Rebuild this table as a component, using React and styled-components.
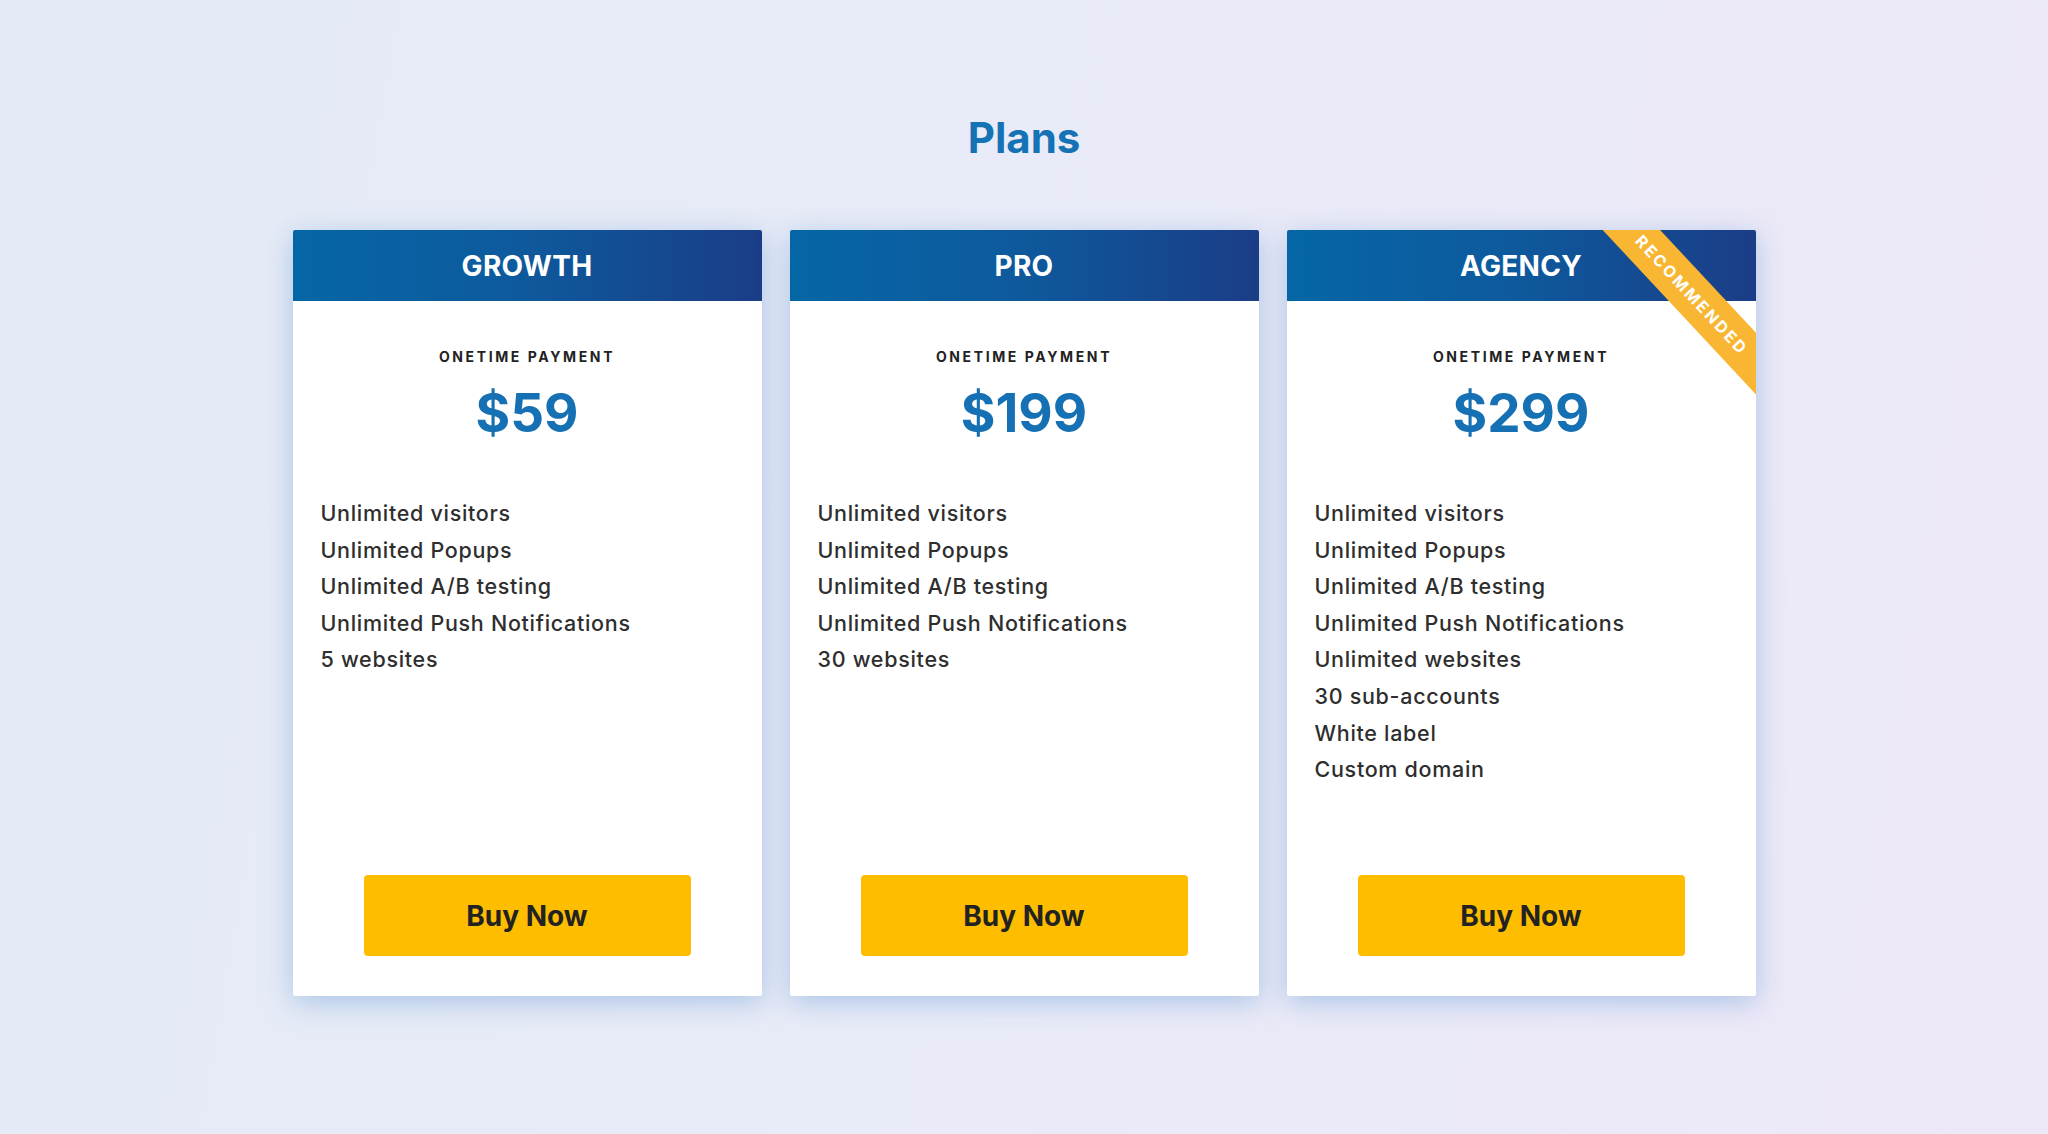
import React from "react";
import styled, { createGlobalStyle } from "styled-components";

const GlobalStyle = createGlobalStyle`
  html, body {
    margin: 0;
    padding: 0;
  }
  body {
    font-family: Inter, "Noto Sans", "Liberation Sans", sans-serif;
    background: linear-gradient(100deg, #e4ebf6 0%, #e9ebf8 50%, #ede8f8 100%);
  }
`;

const Page = styled.div`
  width: 2048px;
  height: 1134px;
  display: flex;
  flex-direction: column;
  align-items: center;
  padding-top: 113px;
  box-sizing: border-box;
`;

const Title = styled.h1`
  margin: 0 0 68px;
  font-size: 42px;
  line-height: 49px;
  font-weight: 700;
  color: #1572b4;
`;

const Row = styled.div`
  display: flex;
  gap: 28px;
`;

const Card = styled.div`
  position: relative;
  overflow: hidden;
  width: 469px;
  height: 766px;
  background: #fff;
  border-radius: 2px;
  box-shadow: 0 6px 28px rgba(120, 165, 215, 0.55);
  display: flex;
  flex-direction: column;
  align-items: center;
`;

const Header = styled.div`
  width: 100%;
  height: 71px;
  display: flex;
  align-items: center;
  justify-content: center;
  background: linear-gradient(90deg, #0566a6 0%, #0d5b9e 45%, #1b3d87 100%);
  color: #fff;
  font-size: 28px;
  font-weight: 700;
  letter-spacing: 0.3px;
`;

const Ribbon = styled.div`
  position: absolute;
  top: 44px;
  right: -56px;
  width: 240px;
  height: 42px;
  background: #f8b632;
  color: #fff;
  transform: rotate(47deg);
  display: flex;
  align-items: center;
  justify-content: center;
  font-size: 16px;
  font-weight: 700;
  letter-spacing: 2.5px;
`;

const Label = styled.div`
  margin-top: 47px;
  font-size: 14px;
  line-height: 17px;
  font-weight: 700;
  letter-spacing: 2.6px;
  color: #222;
`;

const Price = styled.div`
  margin-top: 21px;
  font-size: 53px;
  line-height: 54px;
  font-weight: 700;
  color: #1571b3;
`;

const Features = styled.ul`
  align-self: stretch;
  list-style: none;
  margin: 55px 0 0;
  padding: 0 28px;
`;

const Feature = styled.li`
  font-size: 21.5px;
  line-height: 36.6px;
  font-weight: 500;
  letter-spacing: 0.7px;
  color: #2e2e2e;
`;

const BuyButton = styled.button`
  margin-top: auto;
  margin-bottom: 40px;
  width: 327px;
  height: 81px;
  border: none;
  border-radius: 4px;
  background: #ffbd00;
  color: #222;
  font-family: inherit;
  font-size: 28px;
  font-weight: 700;
  cursor: pointer;
`;

const plans = [
  {
    name: "GROWTH",
    price: "$59",
    features: [
      "Unlimited visitors",
      "Unlimited Popups",
      "Unlimited A/B testing",
      "Unlimited Push Notifications",
      "5 websites",
    ],
  },
  {
    name: "PRO",
    price: "$199",
    features: [
      "Unlimited visitors",
      "Unlimited Popups",
      "Unlimited A/B testing",
      "Unlimited Push Notifications",
      "30 websites",
    ],
  },
  {
    name: "AGENCY",
    price: "$299",
    recommended: true,
    features: [
      "Unlimited visitors",
      "Unlimited Popups",
      "Unlimited A/B testing",
      "Unlimited Push Notifications",
      "Unlimited websites",
      "30 sub-accounts",
      "White label",
      "Custom domain",
    ],
  },
];

export default function App() {
  return (
    <>
      <GlobalStyle />
      <Page>
        <Title>Plans</Title>
        <Row>
          {plans.map((plan) => (
            <Card key={plan.name}>
              <Header>{plan.name}</Header>
              {plan.recommended && <Ribbon>RECOMMENDED</Ribbon>}
              <Label>ONETIME PAYMENT</Label>
              <Price>{plan.price}</Price>
              <Features>
                {plan.features.map((f) => (
                  <Feature key={f}>{f}</Feature>
                ))}
              </Features>
              <BuyButton>Buy Now</BuyButton>
            </Card>
          ))}
        </Row>
      </Page>
    </>
  );
}
